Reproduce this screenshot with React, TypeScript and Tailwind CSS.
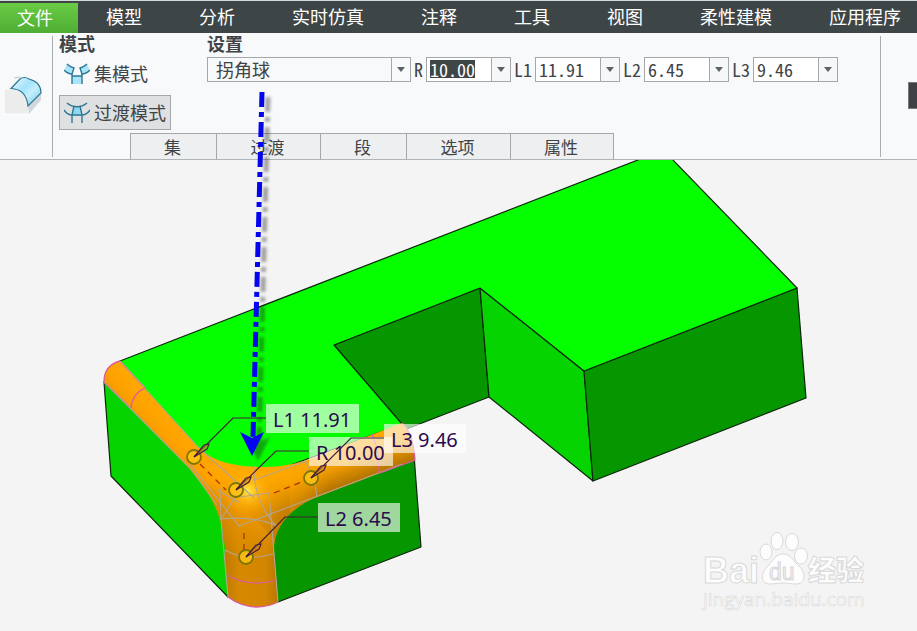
import React, { useEffect, useRef } from "react";

const MENU = ["模型", "分析", "实时仿真", "注释", "工具", "视图", "柔性建模", "应用程序"];

const PANELS = [
  { label: "集", width: "w-[86px]" },
  { label: "过渡", width: "w-[104px]" },
  { label: "段", width: "w-[86px]" },
  { label: "选项", width: "w-[104px]" },
  { label: "属性", width: "w-[104px]" },
];

function Caret() {
  return (
    <svg className="w-2 h-1.5" viewBox="0 0 8 6">
      <path d="M0 0h8L4 5z" fill="#5c6163" />
    </svg>
  );
}

function RoundIcon() {
  return (
    <svg className="w-[46px] h-11" viewBox="0 74 46 44" fill="none">
      <defs>
        <linearGradient id="surf" x1="0" y1="0" x2="1" y2="1">
          <stop offset="0" stopColor="#f2fbff" />
          <stop offset="0.4" stopColor="#a4e3fb" />
          <stop offset="0.6" stopColor="#c6effc" />
          <stop offset="1" stopColor="#62c4ea" />
        </linearGradient>
      </defs>
      <path d="M4 89h9c9 1 15 8 16 17v8H4z" fill="#ececec" stroke="#fff" />
      <path d="M28 106l13-14v8L29 114z" fill="#d0d8de" />
      <path d="M11 88.500L20 79C22 77 26 77 29 79C37 81 41 86 41 93L28 106C27 96 22 89 11 88.500Z" fill="url(#surf)" stroke="#2f7793" strokeWidth="1.2" />
      <path d="M14 78l6-1" stroke="#b9c1c5" />
    </svg>
  );
}

function SetModeIcon() {
  return (
    <svg className="w-[26px] h-[22px] shrink-0" viewBox="0 0 26 22" fill="none" stroke="#2f7793" strokeWidth="1.4">
      <path d="M3 1l7 4-2 7-8-4z" fill="#a9e4f8" stroke="none" />
      <path d="M23 1l-7 4 2 7 8-4z" fill="#a9e4f8" stroke="none" />
      <path d="M8 13h10v8H8z" fill="#a9e4f8" stroke="none" />
      <path d="M3 1c2 2 4 3 7 4L8 11C5 11 3 10 0 7" />
      <path d="M23 1c-2 2-4 3-7 4l2 6c3 0 5-1 8-4" />
      <path d="M8 21V11M18 21V11M8 13h10" />
    </svg>
  );
}

function TransitionModeIcon() {
  return (
    <svg className="w-[26px] h-[22px] shrink-0" viewBox="0 0 26 22" fill="none" stroke="#2f7793" strokeWidth="1.4">
      <path d="M10 5h6l2 8H8z" fill="#8ed8f3" stroke="none" />
      <path d="M3 1c6 5 14 5 20 0" />
      <path d="M0 8c2 3 5 5 8 5h10c3 0 6-2 8-5" />
      <path d="M10 4l-2 9v8M16 4l2 9v8" />
    </svg>
  );
}

function ValueBox({ label, value, selected }: { label: string; value: string; selected?: boolean }) {
  const ref = useRef<HTMLInputElement>(null);

  useEffect(() => {
    if (selected && ref.current) {
      ref.current.focus();
      ref.current.select();
    }
  }, [selected]);

  return (
    <div className="flex items-center [font-feature-settings:'hwid']">
      <label htmlFor={label} className="px-[3px] pb-0.5">{label}</label>
      <div className="flex w-[85px] h-[25px] border border-[#a4a8aa] bg-white">
        <input
          id={label}
          ref={ref}
          defaultValue={value}
          className="min-w-0 flex-1 h-[18px] mt-0.5 pl-[3px] leading-[18px] outline-none selection:bg-[#3f4647] selection:text-white"
        />
        <button aria-label={`${label} 列表`} className="w-[19px] border-l border-[#a4a8aa] bg-[#f6f7f8] flex items-center justify-center">
          <Caret />
        </button>
      </div>
    </div>
  );
}

function Ribbon() {
  return (
    <div className="flex h-[127px] bg-[#f8f9fb] border-b border-[#aeb5b9] text-lg leading-5 text-[#404446]">
      <div className="w-[53px] shrink-0 mt-[3px] mb-0.5 pt-[38px] border-r border-[#a9adb0]">
        <RoundIcon />
      </div>
      <div className="flex-1 flex flex-col justify-between pl-1.5">
        <div className="flex">
          <div className="w-[148px] shrink-0">
            <h2 className="font-bold leading-5">模式</h2>
            <button className="flex items-center gap-1 h-[34px] mt-1 pl-[5px]">
              <SetModeIcon />
              <span className="pb-0.5">集模式</span>
            </button>
            <button className="flex items-center gap-1 w-28 h-[35px] mt-1 pl-1 bg-[#dee0e2] border border-[#a4a8aa] whitespace-nowrap">
              <TransitionModeIcon />
              <span className="pb-0.5">过渡模式</span>
            </button>
          </div>
          <div>
            <h2 className="font-bold leading-5">设置</h2>
            <div className="flex mt-1">
              <div className="relative w-[204px]">
                <select aria-label="过渡类型" className="appearance-none w-full h-[25px] pl-2 pb-0.5 border border-[#a4a8aa] bg-[#f8f9fa] outline-none">
                  <option>拐角球</option>
                </select>
                <span className="absolute right-px inset-y-px w-[19px] border-l border-[#a4a8aa] flex items-center justify-center pointer-events-none">
                  <Caret />
                </span>
              </div>
              <ValueBox label="R" value="10.00" selected />
              <ValueBox label="L1" value="11.91" />
              <ValueBox label="L2" value="6.45" />
              <ValueBox label="L3" value="9.46" />
            </div>
          </div>
        </div>
        <div className="flex pl-[71px] text-[17px]">
          {PANELS.map((p) => (
            <button key={p.label} className={`${p.width} h-[26px] pr-0.5 border-t border-l last:border-r border-[#a4a8aa] bg-[#eeeff0]`}>
              {p.label}
            </button>
          ))}
        </div>
      </div>
      <div className="w-[37px] shrink-0 mt-[3px] mb-0.5 border-l border-[#a9adb0]">
        <div className="w-[9px] h-[27px] mt-[46px] ml-auto bg-[#404144] border border-r-0 border-[#77797b]" />
      </div>
    </div>
  );
}

interface CalloutProps {
  text: string;
  x: number;
  y: number;
  width: number;
  tip: [number, number];
}

function CalloutBox({ text, x, y, width }: CalloutProps) {
  return (
    <g>
      <rect x={x} y={y} width={width} height="29" fill="#fff" fillOpacity="0.62" />
      <text x={x + 7} y={y + 23} fontSize="20" fill="#2b0a4e" className="font-['Noto_Sans']">{text}</text>
    </g>
  );
}

function CalloutLine({ x, y, tip: [tx, ty] }: CalloutProps) {
  return (
    <g fill="none" stroke="#42203c" strokeWidth="1.2">
      <circle cx={tx} cy={ty} r="7" fill="#ffc414" fillOpacity="0.8" stroke="#7d7600" strokeWidth="1.8" />
      <path d={`M${x} ${y + 14}H${x - 33}L${tx} ${ty}`} />
      <path d={`M${tx} ${ty}l10-12 5-1-2 5z`} fill="#d8901d" fillOpacity="0.5" />
    </g>
  );
}

const CALLOUTS: CalloutProps[] = [
  { text: "L1 11.91", x: 266, y: 404, width: 93, tip: [194, 457] },
  { text: "R 10.00", x: 309, y: 437, width: 84, tip: [236, 490] },
  { text: "L3 9.46", x: 384, y: 424, width: 82, tip: [311, 478] },
  { text: "L2 6.45", x: 318, y: 503, width: 82, tip: [246, 557] },
];

const BLEND =
  "M120 361L198 447C212 461 232 467 265 467C298 467 322 454 348 444L402 423Q413 432 415 460L380 473L317 497C290 508 272 528 274 553L278 602Q268 607 256 607Q240 606 228 597L225 548C223 512 207 486 181 460L104 382C104 371 109 364 120 361Z";

function Watermark() {
  return (
    <g fill="#fdfdfd" stroke="#d9d9d9" strokeWidth="1">
      <text x="703" y="583" fontSize="36" className="font-['Liberation_Sans'] font-bold">Bai</text>
      <ellipse cx="766" cy="552" rx="6" ry="8" />
      <ellipse cx="777" cy="541" rx="6" ry="8.5" />
      <ellipse cx="792" cy="542" rx="6.5" ry="8.5" />
      <ellipse cx="801" cy="556" rx="6.5" ry="8" />
      <path d="M783 554c8 0 10 7 16 12 8 8 6 18-3 18-5 0-8-1-13-1s-8 1-13 1c-9 0-10-10-3-17 6-6 8-13 16-13z" />
      <text x="769" y="580" fontSize="23" fill="#f1f1f1" className="font-['Liberation_Sans']">du</text>
      <text x="808" y="581" fontSize="28" className="font-['Noto_Sans_CJK_SC'] font-black">经验</text>
      <text x="703" y="606" fontSize="19" strokeWidth="0.6" className="font-['Open_Sans']">jingyan.baidu.com</text>
    </g>
  );
}

function Model() {
  return (
    <svg className="block w-full" viewBox="0 160 917 471">
      <defs>
        <linearGradient id="stem" gradientUnits="userSpaceOnUse" x1="222" y1="0" x2="280" y2="0">
          <stop offset="0" stopColor="#ba7700" />
          <stop offset="0.3" stopColor="#d68900" />
          <stop offset="0.75" stopColor="#d28600" />
          <stop offset="1" stopColor="#b67400" />
        </linearGradient>
        <linearGradient id="stemFade" gradientUnits="userSpaceOnUse" x1="0" y1="480" x2="0" y2="560">
          <stop offset="0" stopColor="#fff" stopOpacity="0" />
          <stop offset="1" stopColor="#fff" />
        </linearGradient>
        <mask id="stemMask" maskUnits="userSpaceOnUse" x="100" y="460" width="190" height="160">
          <rect x="100" y="460" width="190" height="160" fill="url(#stemFade)" />
        </mask>
        <linearGradient id="arm" gradientUnits="userSpaceOnUse" x1="340" y1="447" x2="354" y2="486">
          <stop offset="0" stopColor="#fea300" stopOpacity="0" />
          <stop offset="0.45" stopColor="#ee9a00" />
          <stop offset="1" stopColor="#a86b00" />
        </linearGradient>
        <linearGradient id="armFade" gradientUnits="userSpaceOnUse" x1="245" y1="0" x2="330" y2="0">
          <stop offset="0" stopColor="#fff" stopOpacity="0" />
          <stop offset="1" stopColor="#fff" />
        </linearGradient>
        <mask id="armMask" maskUnits="userSpaceOnUse" x="235" y="410" width="190" height="130">
          <rect x="235" y="410" width="190" height="130" fill="url(#armFade)" />
        </mask>
        <linearGradient id="tube" gradientUnits="userSpaceOnUse" x1="170" y1="414" x2="150" y2="433">
          <stop offset="0" stopColor="#ffa800" />
          <stop offset="0.6" stopColor="#fda200" />
          <stop offset="1" stopColor="#f09800" />
        </linearGradient>
        <radialGradient id="glow" gradientUnits="userSpaceOnUse" cx="248" cy="491" r="24">
          <stop offset="0" stopColor="#ffee4a" />
          <stop offset="0.4" stopColor="#ffc21c" stopOpacity="0.7" />
          <stop offset="1" stopColor="#ffa500" stopOpacity="0" />
        </radialGradient>
        <clipPath id="blendClip">
          <path d={BLEND} />
        </clipPath>
      </defs>
      <g stroke="#0c250c" strokeWidth="1.2" strokeLinejoin="round">
        <path d="M334 345L480 288L489 397L404 430Z" fill="#059600" />
        <path d="M480 288L584 371L593 481L489 397Z" fill="#06d400" />
        <path d="M584 371L797 288L806 398L593 481Z" fill="#059600" />
        <path d="M104 382L111 476L228 597L250 520Z" fill="#06d400" />
        <path d="M278 602L421 547L414 455L260 500Z" fill="#059600" />
        <path d="M120 361L643 158H671L797 288L584 371L480 288L334 345L402 424L250 480L190 450Z" fill="#06ff00" />
      </g>
      <path d={BLEND} fill="url(#tube)" />
      <g clipPath="url(#blendClip)">
        <rect x="180" y="460" width="110" height="150" fill="url(#stem)" mask="url(#stemMask)" />
        <path d="M235 425H420V540H276L235 500Z" fill="url(#arm)" mask="url(#armMask)" />
        <circle cx="248" cy="491" r="24" fill="url(#glow)" />
      </g>
      <g fill="none" stroke="#b5a48e" strokeWidth="1.1">
        <path d="M120 361L198 447M104 382L190 468L217 505" />
        <path d="M198 447L254 498M190 464L239 526L402 464" />
        <path d="M254 466C253 490 263 512 277 527M220 488L221 519L239 491M220 519C240 517 260 518 277 526" />
        <path d="M254 480L306 461M305 460C312 473 316 485 317 497M269 493L278 602M221 519L228 597" />
        <path d="M240 497L269 493M225 550Q246 562 273 554M217 490L240 503" />
      </g>
      <g fill="none" stroke="#dc5c9b" strokeWidth="1.3">
        <path d="M120 361L145 388M104 382L131 408" stroke="#d08a90" />
        <path d="M104 382C104 371 109 364 120 361M145 388Q132 394 131 408" />
        <path d="M372 434Q380 453 379 473M402 423Q413 432 415 460L380 473" />
        <path d="M227 575Q250 588 276 580M228 597Q240 606 256 607Q268 607 278 602" />
      </g>
      <g stroke="#a92a00" strokeWidth="1.2" strokeDasharray="6 5">
        <path d="M200 464L226 490M274 493L304 481M244 533V551" />
      </g>
      {CALLOUTS.map((c) => (
        <CalloutBox key={c.text} {...c} />
      ))}
      {CALLOUTS.map((c) => (
        <CalloutLine key={c.text} {...c} />
      ))}
      <Watermark />
    </svg>
  );
}

function PointerArrow() {
  return (
    <svg className="absolute left-0 top-0 w-full pointer-events-none" viewBox="0 0 917 631">
      <defs>
        <filter id="soft" filterUnits="userSpaceOnUse" x="220" y="80" width="80" height="400">
          <feGaussianBlur stdDeviation="1.5" />
        </filter>
      </defs>
      <g opacity="0.4" filter="url(#soft)" transform="translate(6 5)">
        <path d="M262 92L253 437" stroke="#222" strokeWidth="5" strokeDasharray="15 5 5 5" />
        <path d="M240 432L252 438L264 432L252 456Z" fill="#222" />
      </g>
      <path d="M262 92L253 437" stroke="#0404ee" strokeWidth="5" strokeDasharray="15 5 5 5" />
      <path d="M240 432L252 438L264 432L252 456Z" fill="#0404ee" />
    </svg>
  );
}

export default function App() {
  return (
    <div className="relative min-h-screen overflow-hidden bg-[#f4f4f4] font-['Noto_Sans_CJK_SC',sans-serif]">
      <nav className="flex h-[33px] bg-[#3d4546] border-t border-[#cfdcda] text-lg leading-[30px] text-white whitespace-nowrap">
        <button className="w-[78px] shrink-0 mt-0.5 pr-2 pb-0.5 leading-7 bg-linear-to-b from-[#69cb45] to-[#4fae33]">文件</button>
        <div className="flex gap-[57px] pl-7 pb-0.5">
          {MENU.map((item) => (
            <button key={item}>{item}</button>
          ))}
        </div>
      </nav>
      <Ribbon />
      <Model />
      <PointerArrow />
    </div>
  );
}
